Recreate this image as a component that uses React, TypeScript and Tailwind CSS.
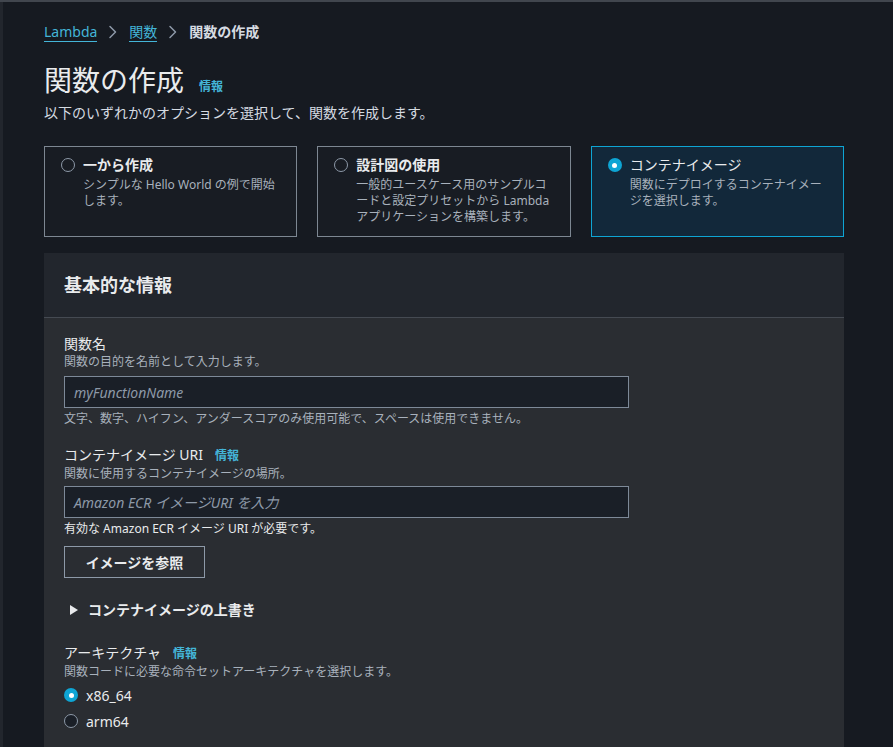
import React from "react";

const font = { fontFamily: '"Noto Sans", "Noto Sans CJK JP", sans-serif' };

function Chevron() {
  return (
    <svg width="10" height="14" viewBox="0 0 10 14" className="mx-[11px]" fill="none">
      <path d="M2 1.5 L7.5 7 L2 12.5" stroke="#8d99a8" strokeWidth="1.5" strokeLinecap="round" strokeLinejoin="round" />
    </svg>
  );
}

function Radio({ checked, filled }: { checked?: boolean; filled?: boolean }) {
  if (checked) {
    return (
      <span className="flex h-[14px] w-[14px] shrink-0 items-center justify-center rounded-full bg-[#0ea5d4]">
        <span className="h-[5px] w-[5px] rounded-full bg-white" />
      </span>
    );
  }
  return (
    <span
      className={
        "h-[14px] w-[14px] shrink-0 rounded-full border-[1.5px] border-[#8d99a8] " +
        (filled ? "bg-[#1a1f27]" : "bg-transparent")
      }
    />
  );
}

function Card({
  title,
  desc,
  selected,
}: {
  title: string;
  desc: string;
  selected?: boolean;
}) {
  return (
    <div
      className={
        "h-[91px] border pl-[16px] pr-4 pt-2 " +
        (selected ? "border-[#0ea5d4] bg-[#12283a]" : "border-[#7d8792] bg-[#181c23]")
      }
    >
      <div className="flex items-start">
        <div className="flex h-5 items-center">
          <Radio checked={selected} />
        </div>
        <div className="ml-[8px]">
          <div
            className={
              "text-[14px] leading-5 " +
              (selected ? "font-normal text-[#e9ebed]" : "font-bold text-[#e9ebed]")
            }
          >
            {title}
          </div>
          <div className="mt-0.5 text-[12px] leading-4 text-[#a8b1bc]">{desc}</div>
        </div>
      </div>
    </div>
  );
}

function Info() {
  return <span className="text-[12px] font-bold text-[#44b5d8]">情報</span>;
}

export default function App() {
  return (
    <div style={font} className="flex min-h-screen w-full border-t-2 border-[#41464e] bg-[#161a21]">
      <div className="w-[3px] shrink-0 bg-[#22262d]" />
      <div className="flex-1 pl-[41px] pr-[49px]">
        {/* breadcrumb */}
        <div className="flex items-center pt-[20px] text-[14px] leading-5">
          <span className="border-b border-[#44b5d8] leading-[18px] text-[#44b5d8]">Lambda</span>
          <Chevron />
          <span className="border-b border-[#44b5d8] leading-[18px] text-[#44b5d8]">関数</span>
          <Chevron />
          <span className="font-bold text-[#d5dbe1]">関数の作成</span>
        </div>

        {/* title */}
        <div className="mt-[20px] flex items-baseline">
          <h1 className="text-[28px] font-normal leading-9 text-[#e9ebed]">関数の作成</h1>
          <span className="ml-[15px]">
            <Info />
          </span>
        </div>
        <p className="mt-[5px] text-[14px] leading-5 text-[#d5dbe1]">
          以下のいずれかのオプションを選択して、関数を作成します。
        </p>

        {/* cards */}
        <div className="mt-[23px] grid grid-cols-3 gap-5">
          <Card title="一から作成" desc="シンプルな Hello World の例で開始します。" />
          <Card
            title="設計図の使用"
            desc="一般的ユースケース用のサンプルコードと設定プリセットから Lambda アプリケーションを構築します。"
          />
          <Card selected title="コンテナイメージ" desc="関数にデプロイするコンテナイメージを選択します。" />
        </div>

        {/* panel */}
        <div className="mt-4 bg-[#2a2d32]">
          <div className="border-b border-[#454a52] bg-[#22262d] px-5 py-[18px]">
            <h2 className="text-[18px] font-bold leading-7 text-[#e9ebed]">基本的な情報</h2>
          </div>
          <div className="px-5 pb-10 pt-4">
            {/* function name */}
            <div className="text-[14px] leading-5 text-[#e9ebed]">関数名</div>
            <div className="text-[12px] leading-4 text-[#a8b1bc]">関数の目的を名前として入力します。</div>
            <div className="mt-1.5 flex h-8 w-[565px] items-center border border-[#7d8998] bg-[#1a1f27] px-[9px]">
              <span className="text-[14px] italic text-[#8d99a8]">myFunctionName</span>
            </div>
            <div className="mt-[3px] text-[12px] leading-4 text-[#a8b1bc]">
              文字、数字、ハイフン、アンダースコアのみ使用可能で、スペースは使用できません。
            </div>

            {/* image uri */}
            <div className="mt-[18px] flex items-baseline text-[14px] leading-5 text-[#e9ebed]">
              <span>コンテナイメージ URI</span>
              <span className="ml-[12px]">
                <Info />
              </span>
            </div>
            <div className="text-[12px] leading-4 text-[#a8b1bc]">関数に使用するコンテナイメージの場所。</div>
            <div className="mt-1 flex h-8 w-[565px] items-center border border-[#7d8998] bg-[#1a1f27] px-[9px]">
              <span className="text-[14px] italic text-[#8d99a8]">Amazon ECR イメージURI を入力</span>
            </div>
            <div className="mt-[3px] text-[12px] leading-4 text-[#e9ebed]">
              有効な Amazon ECR イメージ URI が必要です。
            </div>
            <button className="mt-[9px] flex h-8 w-[141px] items-center justify-center border border-[#8d99a8] bg-transparent text-[14px] font-bold text-[#e9ebed]">
              イメージを参照
            </button>

            {/* expander */}
            <div className="mt-[22px] flex items-center text-[14px] leading-5">
              <svg width="8" height="10" viewBox="0 0 8 10" className="ml-[6px]">
                <path d="M0 0 L8 5 L0 10 Z" fill="#e9ebed" />
              </svg>
              <span className="ml-[10px] font-bold text-[#e9ebed]">コンテナイメージの上書き</span>
            </div>

            {/* architecture */}
            <div className="mt-[23px] flex items-baseline text-[14px] leading-5 text-[#e9ebed]">
              <span>アーキテクチャ</span>
              <span className="ml-[12px]">
                <Info />
              </span>
            </div>
            <div className="text-[12px] leading-4 text-[#a8b1bc]">
              関数コードに必要な命令セットアーキテクチャを選択します。
            </div>
            <div className="mt-[5px] flex h-5 items-center">
              <Radio checked />
              <span className="ml-[8px] text-[14px] text-[#e9ebed]">x86_64</span>
            </div>
            <div className="mt-[6px] flex h-5 items-center">
              <Radio filled />
              <span className="ml-[8px] text-[14px] text-[#e9ebed]">arm64</span>
            </div>
          </div>
        </div>
      </div>
    </div>
  );
}
